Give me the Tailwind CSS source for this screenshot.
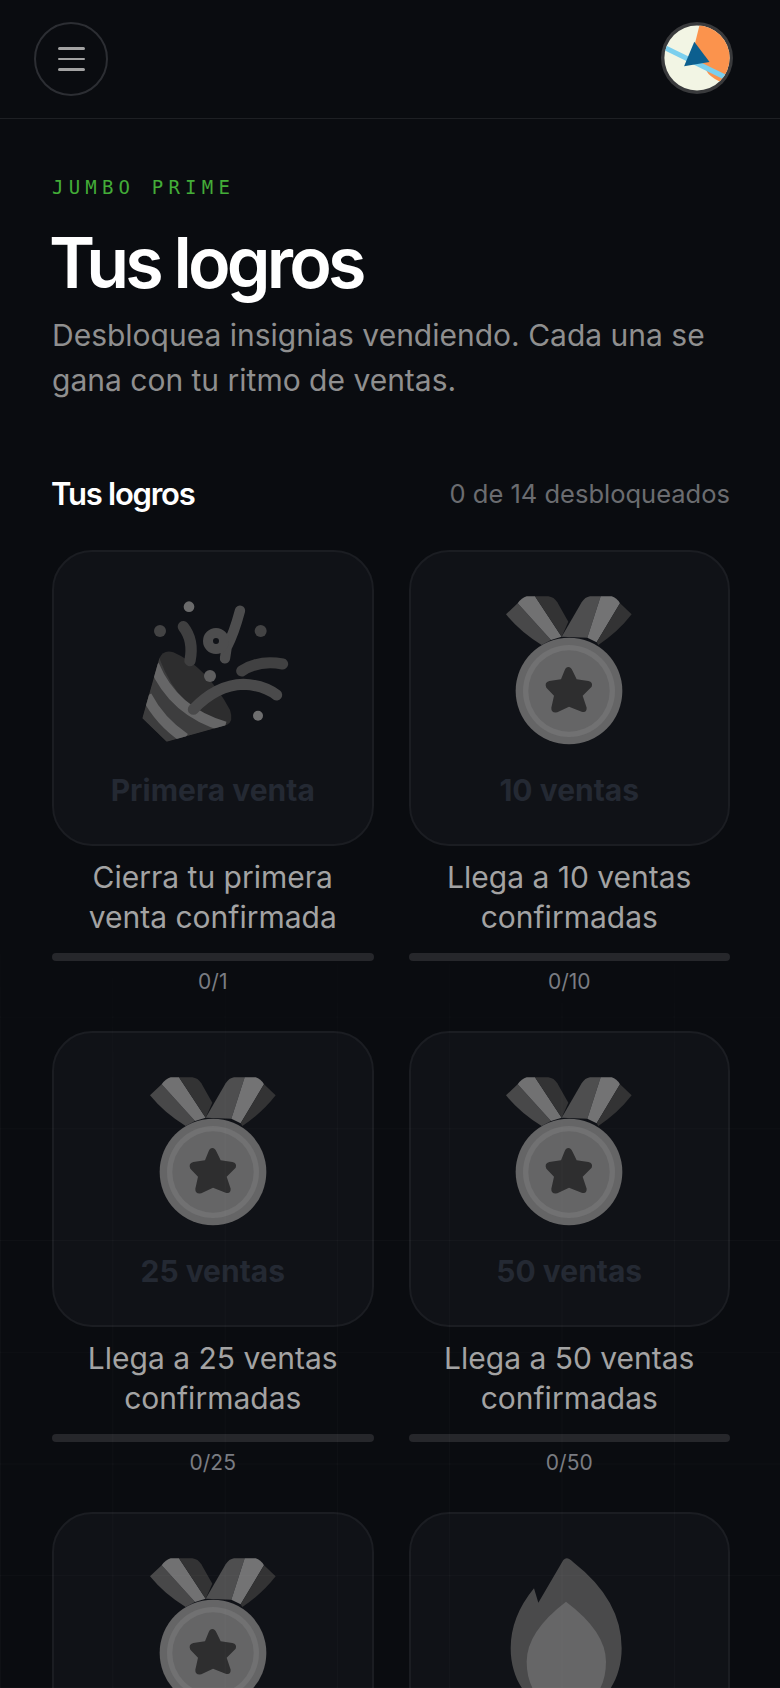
<!DOCTYPE html>
<html>

<head>
  <title>Tus logros</title>
  <script src="https://cdn.jsdelivr.net/npm/@tailwindcss/browser@4"></script>
</head>

<body class="bg-[#0a0c10]">
  <div class="relative h-[1688px] overflow-hidden font-['Inter',sans-serif]">
    <!-- Header -->
    <header class="h-[119px] pl-[34px] pr-[47px] pt-[22px] flex justify-between items-start border-b border-[#1e2024]">
      <button class="w-[74px] h-[74px] rounded-full border-2 border-[#2c2e33] flex flex-col items-center justify-center gap-[8px]">
        <span class="block w-[27px] h-[2.5px] rounded-full bg-[#a3a3a3]"></span>
        <span class="block w-[27px] h-[2.5px] rounded-full bg-[#a3a3a3]"></span>
        <span class="block w-[27px] h-[2.5px] rounded-full bg-[#a3a3a3]"></span>
      </button>
      <svg class="w-[72px] h-[72px]" viewBox="60 37 212 212">
        <defs>
          <clipPath id="av"><circle cx="166" cy="143" r="96" /></clipPath>
        </defs>
        <circle cx="166" cy="143" r="106" fill="#393a3c" />
        <circle cx="166" cy="143" r="96" fill="#f2f5e4" />
        <g clip-path="url(#av)">
          <path d="M175 40 L160 100 L180 160 L200 190 Q215 205 240 215 L290 180 L290 40 Z" fill="#fb934d" />
          <path d="M70 112 L250 200" stroke="#7bcfee" stroke-width="15" fill="none" />
        </g>
        <path d="M158 95 L203 155 L128 167 Z" fill="#0c5f8f" />
      </svg>
    </header>

    <main class="pl-[52px] pr-[50px] pt-[56px]">
      <p class="font-['DejaVu_Sans_Mono',monospace] text-[19px] leading-[24px] tracking-[5.2px] text-[#43ad38]">JUMBO PRIME</p>
      <h1 class="mt-[22px] -ml-[3px] text-[70px] leading-[84px] font-semibold tracking-[-0.055em] text-white">Tus logros</h1>
      <p class="mt-[8px] text-[30px] leading-[45px] text-[#8f8f8f]">Desbloquea insignias vendiendo. Cada una se gana con tu ritmo de ventas.</p>

      <div class="mt-[71px] flex justify-between items-center h-[40px]">
        <h2 class="-ml-[1px] text-[31px] font-semibold tracking-[-0.04em] text-white">Tus logros</h2>
        <span class="text-[25.5px] text-[#6b6c70]">0 de 14 desbloqueados</span>
      </div>

      <div class="mt-[36px] grid grid-cols-2 gap-x-[35px] gap-y-[35px]">
        <!-- Primera venta -->
        <div class="text-center">
          <div class="h-[296px] pt-[38px] rounded-[40px] border-2 border-[#1b1d22] bg-[#101217]">
            <svg class="mx-auto w-[160px] h-[160px]" viewBox="9 0 480 480">
              <defs>
                <clipPath id="cone"><path d="M88 205 Q100 178 130 187 Q230 230 300 360 Q312 395 290 405 L110 455 L37 385 Z" /></clipPath>
              </defs>
              <path d="M88 205 Q100 178 130 187 Q230 230 300 360 Q312 395 290 405 L110 455 L37 385 Z" fill="#2d2d2e" />
              <g clip-path="url(#cone)">
                <path d="M88 205 L37 385 L110 455 L290 405 Q150 370 88 205 Z" fill="#3d3d3e" />
                <path d="M72 225 Q130 365 285 410" stroke="#666667" stroke-width="31" fill="none" />
                <path d="M50 318 Q90 395 165 445" stroke="#666667" stroke-width="31" fill="none" />
              </g>
              <g fill="none" stroke-linecap="round">
                <path d="M190 358 Q260 285 340 283 Q400 285 440 315" stroke="#4a4a4b" stroke-width="33" />
                <path d="M335 243 Q390 208 458 222" stroke="#414142" stroke-width="33" />
                <path d="M160 110 Q192 150 180 212" stroke="#3f3f40" stroke-width="34" />
                <path d="M330 62 Q312 130 290 172 L285 205" stroke="#4d4d4e" stroke-width="31" />
                <circle cx="258" cy="153" r="24" stroke="#4d4d4e" stroke-width="30" />
              </g>
              <circle cx="177" cy="50" r="16" fill="#6a6a6b" />
              <circle cx="90" cy="123" r="18" fill="#434344" />
              <circle cx="392" cy="123" r="18" fill="#434344" />
              <circle cx="240" cy="258" r="18" fill="#5e5e5f" />
              <circle cx="384" cy="377" r="15" fill="#6e6e6f" />
            </svg>
            <p class="mt-[20px] text-[30px] leading-[40px] font-bold text-[#242933]">Primera venta</p>
          </div>
          <p class="mt-[11px] text-[30px] leading-[40px] text-[#a3a3a3]">Cierra tu primera venta confirmada</p>
          <div class="mt-[16px] h-[8px] rounded-full bg-[#26272b]"></div>
          <p class="mt-[7px] text-[21px] leading-[28px] text-[#7a7c82]">0/1</p>
        </div>

        <!-- 10 ventas -->
        <div class="text-center">
          <div class="h-[296px] pt-[38px] rounded-[40px] border-2 border-[#1b1d22] bg-[#101217]">
            <svg class="mx-auto w-[160px] h-[160px]" viewBox="27 15 480 480">
              <path d="M78 88 L113 55 L213 165 L185 180 Q120 140 78 88 Z" fill="#484849" />
              <path d="M113 55 Q125 38 140 34 L165 34 L245 155 L213 165 Z" fill="#717172" />
              <path d="M165 34 L205 34 Q222 36 232 52 L265 110 L245 155 Z" fill="#333334" />
              <path d="M245 155 L305 52 Q315 36 330 34 L362 34 L322 158 Z" fill="#4e4e4f" />
              <path d="M362 34 L395 34 Q410 38 420 55 L350 172 L322 158 Z" fill="#737374" />
              <path d="M420 55 L455 88 Q415 140 355 180 L350 172 Z" fill="#333334" />
              <circle cx="267" cy="318" r="160" fill="#656566" />
              <circle cx="267" cy="318" r="138" fill="#717172" />
              <circle cx="267" cy="318" r="122" fill="#656566" />
              <path d="M265 246 Q273 246 278 258 L290 283 L325 288 Q340 292 335 305 L308 332 L320 368 Q320 385 305 380 L267 365 L232 382 Q213 385 214 368 L222 332 L199 308 Q192 292 208 288 L243 283 L254 256 Q258 246 265 246 Z" fill="#2e2e2f" />
            </svg>
            <p class="mt-[20px] text-[30px] leading-[40px] font-bold text-[#242933]">10 ventas</p>
          </div>
          <p class="mt-[11px] text-[30px] leading-[40px] text-[#a3a3a3]">Llega a 10 ventas confirmadas</p>
          <div class="mt-[16px] h-[8px] rounded-full bg-[#26272b]"></div>
          <p class="mt-[7px] text-[21px] leading-[28px] text-[#7a7c82]">0/10</p>
        </div>

        <!-- 25 ventas -->
        <div class="text-center">
          <div class="h-[296px] pt-[38px] rounded-[40px] border-2 border-[#1b1d22] bg-[#101217]">
            <svg class="mx-auto w-[160px] h-[160px]" viewBox="27 15 480 480">
              <path d="M78 88 L113 55 L213 165 L185 180 Q120 140 78 88 Z" fill="#484849" />
              <path d="M113 55 Q125 38 140 34 L165 34 L245 155 L213 165 Z" fill="#717172" />
              <path d="M165 34 L205 34 Q222 36 232 52 L265 110 L245 155 Z" fill="#333334" />
              <path d="M245 155 L305 52 Q315 36 330 34 L362 34 L322 158 Z" fill="#4e4e4f" />
              <path d="M362 34 L395 34 Q410 38 420 55 L350 172 L322 158 Z" fill="#737374" />
              <path d="M420 55 L455 88 Q415 140 355 180 L350 172 Z" fill="#333334" />
              <circle cx="267" cy="318" r="160" fill="#656566" />
              <circle cx="267" cy="318" r="138" fill="#717172" />
              <circle cx="267" cy="318" r="122" fill="#656566" />
              <path d="M265 246 Q273 246 278 258 L290 283 L325 288 Q340 292 335 305 L308 332 L320 368 Q320 385 305 380 L267 365 L232 382 Q213 385 214 368 L222 332 L199 308 Q192 292 208 288 L243 283 L254 256 Q258 246 265 246 Z" fill="#2e2e2f" />
            </svg>
            <p class="mt-[20px] text-[30px] leading-[40px] font-bold text-[#242933]">25 ventas</p>
          </div>
          <p class="mt-[11px] text-[30px] leading-[40px] text-[#a3a3a3]">Llega a 25 ventas confirmadas</p>
          <div class="mt-[16px] h-[8px] rounded-full bg-[#26272b]"></div>
          <p class="mt-[7px] text-[21px] leading-[28px] text-[#7a7c82]">0/25</p>
        </div>

        <!-- 50 ventas -->
        <div class="text-center">
          <div class="h-[296px] pt-[38px] rounded-[40px] border-2 border-[#1b1d22] bg-[#101217]">
            <svg class="mx-auto w-[160px] h-[160px]" viewBox="27 15 480 480">
              <path d="M78 88 L113 55 L213 165 L185 180 Q120 140 78 88 Z" fill="#484849" />
              <path d="M113 55 Q125 38 140 34 L165 34 L245 155 L213 165 Z" fill="#717172" />
              <path d="M165 34 L205 34 Q222 36 232 52 L265 110 L245 155 Z" fill="#333334" />
              <path d="M245 155 L305 52 Q315 36 330 34 L362 34 L322 158 Z" fill="#4e4e4f" />
              <path d="M362 34 L395 34 Q410 38 420 55 L350 172 L322 158 Z" fill="#737374" />
              <path d="M420 55 L455 88 Q415 140 355 180 L350 172 Z" fill="#333334" />
              <circle cx="267" cy="318" r="160" fill="#656566" />
              <circle cx="267" cy="318" r="138" fill="#717172" />
              <circle cx="267" cy="318" r="122" fill="#656566" />
              <path d="M265 246 Q273 246 278 258 L290 283 L325 288 Q340 292 335 305 L308 332 L320 368 Q320 385 305 380 L267 365 L232 382 Q213 385 214 368 L222 332 L199 308 Q192 292 208 288 L243 283 L254 256 Q258 246 265 246 Z" fill="#2e2e2f" />
            </svg>
            <p class="mt-[20px] text-[30px] leading-[40px] font-bold text-[#242933]">50 ventas</p>
          </div>
          <p class="mt-[11px] text-[30px] leading-[40px] text-[#a3a3a3]">Llega a 50 ventas confirmadas</p>
          <div class="mt-[16px] h-[8px] rounded-full bg-[#26272b]"></div>
          <p class="mt-[7px] text-[21px] leading-[28px] text-[#7a7c82]">0/50</p>
        </div>

        <!-- Row cut off by the fold -->
        <div class="text-center">
          <div class="h-[296px] pt-[38px] rounded-[40px] border-2 border-[#1b1d22] bg-[#101217]">
            <svg class="mx-auto w-[160px] h-[160px]" viewBox="27 15 480 480">
              <path d="M78 88 L113 55 L213 165 L185 180 Q120 140 78 88 Z" fill="#484849" />
              <path d="M113 55 Q125 38 140 34 L165 34 L245 155 L213 165 Z" fill="#717172" />
              <path d="M165 34 L205 34 Q222 36 232 52 L265 110 L245 155 Z" fill="#333334" />
              <path d="M245 155 L305 52 Q315 36 330 34 L362 34 L322 158 Z" fill="#4e4e4f" />
              <path d="M362 34 L395 34 Q410 38 420 55 L350 172 L322 158 Z" fill="#737374" />
              <path d="M420 55 L455 88 Q415 140 355 180 L350 172 Z" fill="#333334" />
              <circle cx="267" cy="318" r="160" fill="#656566" />
              <circle cx="267" cy="318" r="138" fill="#717172" />
              <circle cx="267" cy="318" r="122" fill="#656566" />
              <path d="M265 246 Q273 246 278 258 L290 283 L325 288 Q340 292 335 305 L308 332 L320 368 Q320 385 305 380 L267 365 L232 382 Q213 385 214 368 L222 332 L199 308 Q192 292 208 288 L243 283 L254 256 Q258 246 265 246 Z" fill="#2e2e2f" />
            </svg>
          </div>
        </div>

        <div class="text-center">
          <div class="h-[296px] pt-[38px] rounded-[40px] border-2 border-[#1b1d22] bg-[#101217]">
            <svg class="mx-auto w-[160px] h-[160px]" viewBox="267 156 480 480">
              <path d="M500 175 Q508 175 520 187 Q665 300 665 445 C665 560 590 640 500 640 C410 640 332 560 332 445 Q332 350 402 265 L415 308 L490 180 Q495 175 500 175 Z" fill="#4a4a4b" />
              <path d="M498 305 Q618 395 618 485 C618 570 570 630 498 630 C430 630 380 570 380 485 Q380 395 498 305 Z" fill="#666667" />
            </svg>
          </div>
        </div>
      </div>
    </main>

    <!-- Faint background grid, lies over the lower part of the page -->
    <div class="absolute left-0 right-0 top-[905px] bottom-0 pointer-events-none bg-[linear-gradient(to_right,rgba(255,255,255,0.022)_1px,transparent_1px),linear-gradient(to_bottom,rgba(255,255,255,0.022)_1px,transparent_1px)] bg-[size:112.3px_111.7px] [mask-image:linear-gradient(to_bottom,transparent,black_25%)]"></div>
  </div>
</body>

</html>
